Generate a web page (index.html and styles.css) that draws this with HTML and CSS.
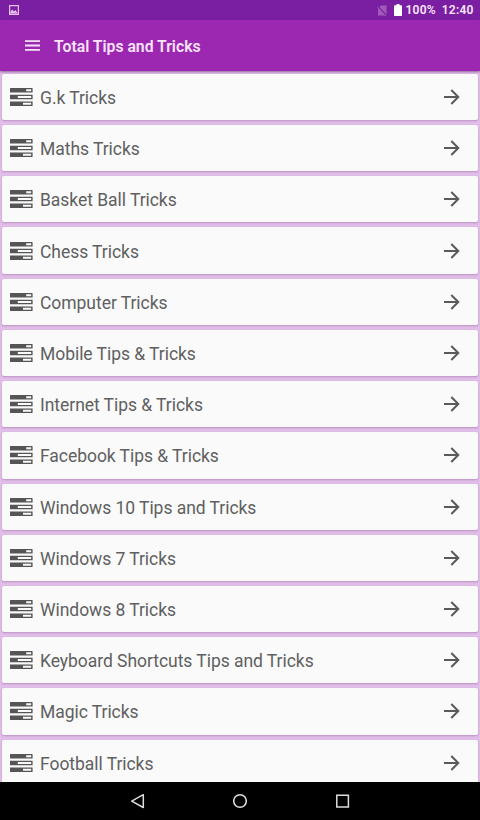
FILE: index.html
```
<!DOCTYPE html>
<html lang="en">
<head>
<meta charset="utf-8">
<title>Total Tips and Tricks</title>
<link rel="stylesheet" href="styles.css">
</head>
<body>
<svg class="defs" width="0" height="0" aria-hidden="true">
  <symbol id="tasks" viewBox="0 0 23 18">
    <path fill="#555" fill-rule="evenodd" d="M.5 0h21.600q.5 0 .5.5v4.100H0V.5Q0 0 .5 0zM16.200 1.300v2h5v-2z"/>
    <path fill="#555" fill-rule="evenodd" d="M0 6.700h22.600v4.600H0zM7.800 8v2h13.400V8z"/>
    <path fill="#555" fill-rule="evenodd" d="M0 13.400h22.600v4.100q0 .5-.5.5H.5q-.5 0-.5-.5zM13 14.700v2h8.200v-2z"/>
  </symbol>
  <symbol id="arrow" viewBox="0 0 16 16">
    <path fill="none" stroke="#5a5a5a" stroke-width="2" d="M0 8h14.300M7.300 1l7 7-7 7"/>
  </symbol>
</svg>
<div class="screen">
  <header class="status">
    <svg class="picture" viewBox="0 0 10 10"><path fill="none" stroke="#e3bfee" stroke-width="1.300" d="M.6.6h8.800v8.800H.6z"/><path fill="#e3bfee" d="M1.200 8.500V7l2-2.500L5 6.500 6.500 5l2.300 3.500z"/></svg>
    <div class="status-right">
      <svg class="nosim" viewBox="0 0 10 11"><path fill="#a05bb9" d="M4 .5h5.500v10H1V3.500z"/><path stroke="#7b1fa2" stroke-width="1.200" d="M.5 1l9 9.500"/><path stroke="#a05bb9" stroke-width=".8" d="M0 1.500l9 9.500"/></svg>
      <svg class="battery" viewBox="0 0 8 12"><path fill="#fff" d="M2.500 0h3v1.200H7.200q.8 0 .8.800v9.200q0 .8-.8.800H.8Q0 12 0 11.200V2q0-.8.8-.8h1.700z"/></svg>
      <span class="percent">100%</span>
      <span class="clock">12:40</span>
    </div>
  </header>
  <div class="toolbar">
    <svg class="menu" viewBox="0 0 15 11"><path stroke="#fbe3fd" stroke-width="1.800" d="M0 1.200h15M0 5.500h15M0 9.800h15"/></svg>
    <h1>Total Tips and Tricks</h1>
  </div>
  <main class="list">
    <div class="card"><svg class="tasks"><use href="#tasks"/></svg><span class="label">G.k Tricks</span><svg class="arrow"><use href="#arrow"/></svg></div>
    <div class="card"><svg class="tasks"><use href="#tasks"/></svg><span class="label">Maths Tricks</span><svg class="arrow"><use href="#arrow"/></svg></div>
    <div class="card"><svg class="tasks"><use href="#tasks"/></svg><span class="label">Basket Ball Tricks</span><svg class="arrow"><use href="#arrow"/></svg></div>
    <div class="card"><svg class="tasks"><use href="#tasks"/></svg><span class="label">Chess Tricks</span><svg class="arrow"><use href="#arrow"/></svg></div>
    <div class="card"><svg class="tasks"><use href="#tasks"/></svg><span class="label">Computer Tricks</span><svg class="arrow"><use href="#arrow"/></svg></div>
    <div class="card"><svg class="tasks"><use href="#tasks"/></svg><span class="label">Mobile Tips &amp; Tricks</span><svg class="arrow"><use href="#arrow"/></svg></div>
    <div class="card"><svg class="tasks"><use href="#tasks"/></svg><span class="label">Internet Tips &amp; Tricks</span><svg class="arrow"><use href="#arrow"/></svg></div>
    <div class="card"><svg class="tasks"><use href="#tasks"/></svg><span class="label">Facebook Tips &amp; Tricks</span><svg class="arrow"><use href="#arrow"/></svg></div>
    <div class="card"><svg class="tasks"><use href="#tasks"/></svg><span class="label">Windows 10 Tips and Tricks</span><svg class="arrow"><use href="#arrow"/></svg></div>
    <div class="card"><svg class="tasks"><use href="#tasks"/></svg><span class="label">Windows 7 Tricks</span><svg class="arrow"><use href="#arrow"/></svg></div>
    <div class="card"><svg class="tasks"><use href="#tasks"/></svg><span class="label">Windows 8 Tricks</span><svg class="arrow"><use href="#arrow"/></svg></div>
    <div class="card"><svg class="tasks"><use href="#tasks"/></svg><span class="label">Keyboard Shortcuts Tips and Tricks</span><svg class="arrow"><use href="#arrow"/></svg></div>
    <div class="card"><svg class="tasks"><use href="#tasks"/></svg><span class="label">Magic Tricks</span><svg class="arrow"><use href="#arrow"/></svg></div>
    <div class="card"><svg class="tasks"><use href="#tasks"/></svg><span class="label">Football Tricks</span><svg class="arrow"><use href="#arrow"/></svg></div>
  </main>
  <nav class="navbar">
    <svg viewBox="0 0 16 16"><path fill="none" stroke="#ddd" stroke-width="1.500" stroke-linejoin="round" d="M13.300 1.700v12.800L1.700 8.100z"/></svg>
    <svg viewBox="0 0 16 16"><circle cx="8" cy="8" r="6.300" fill="none" stroke="#ddd" stroke-width="1.600"/></svg>
    <svg viewBox="0 0 16 16"><path fill="none" stroke="#ddd" stroke-width="1.500" d="M1.800 2.300h11.600v11.600H1.800z"/></svg>
  </nav>
</div>
</body>
</html>
```
FILE: styles.css
```
* { box-sizing: border-box; }
body { margin: 0; font-family: Roboto, sans-serif; }
svg { display: block; flex: none; }
.defs { position: absolute; }
.screen {
  width: 480px;
  height: 820px;
  display: flex;
  flex-direction: column;
  overflow: hidden;
  background: #e1bee7;
}
.status {
  flex: none;
  height: 20px;
  padding: 0 6.500px 0 9px;
  display: flex;
  align-items: center;
  justify-content: space-between;
  background: #7b1fa2;
}
.picture { width: 10px; height: 10px; }
.status-right {
  display: flex;
  align-items: center;
  color: #f8e6fb;
  font-size: 12px;
  font-weight: 600;
  letter-spacing: .2px;
  line-height: 20px;
}
.nosim { width: 10px; height: 11px; margin-right: 7px; }
.battery { width: 8px; height: 12px; margin: -1px 4px 0 0; }
.percent { margin-right: 6px; }
.toolbar {
  flex: none;
  height: 51px;
  padding-left: 24.500px;
  display: flex;
  align-items: center;
  background: #9c27b0;
  box-shadow: 0 1px 2px rgba(74, 20, 90, .5);
}
.menu { width: 15px; height: 11px; margin-right: 14.500px; }
h1 {
  margin: 2px 0 0;
  color: #fbe3fd;
  font-size: 15.750px;
  font-weight: 600;
  line-height: 20px;
}
.list {
  flex: 1;
  min-height: 0;
  overflow: hidden;
  padding: 2.750px 2px 0;
  display: flex;
  flex-direction: column;
  gap: 5px;
}
.card {
  flex: none;
  height: 46.230px;
  padding: 0 18px 0 7.500px;
  display: flex;
  align-items: center;
  border-radius: 2px;
  background: #fafafa;
  box-shadow: 0 1px 2px rgba(100, 40, 115, .3);
}
.tasks { width: 23px; height: 18px; }
.label {
  flex: 1;
  margin: 2px 0 0 7.500px;
  color: #606060;
  font-size: 17.500px;
  letter-spacing: -.045px;
  line-height: 22px;
  white-space: nowrap;
}
.arrow { width: 16px; height: 16px; }
.navbar {
  flex: none;
  height: 38.500px;
  display: flex;
  align-items: center;
  justify-content: center;
  gap: 86.500px;
  background: #000;
}
.navbar svg { width: 16px; height: 16px; }
```
